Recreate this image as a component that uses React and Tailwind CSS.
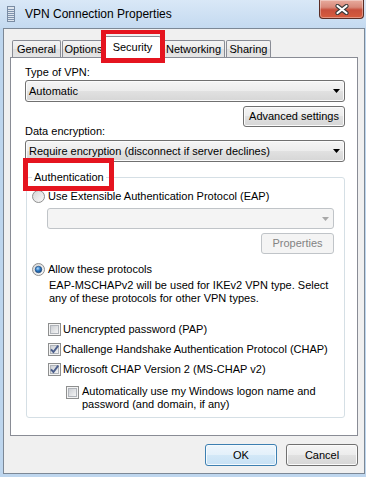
import React from 'react';

const Radio = ({ checked }) => (
    <svg width="13" height="13" viewBox="0 0 13 13" className="shrink-0">
        <defs>
            <linearGradient id="radioFill" x1="0" y1="0" x2="1" y2="1">
                <stop offset="0" stopColor="#d4d4d4" />
                <stop offset="1" stopColor="#fbfbfb" />
            </linearGradient>
            <radialGradient id="radioDot" cx="0.4" cy="0.35" r="0.75">
                <stop offset="0" stopColor="#b5dcfb" />
                <stop offset="0.45" stopColor="#2f7cc6" />
                <stop offset="1" stopColor="#123d73" />
            </radialGradient>
        </defs>
        <circle cx="6.5" cy="6.5" r="6" fill="url(#radioFill)" stroke="#8e8f8f" />
        {checked && <circle cx="6.5" cy="6.5" r="3.3" fill="url(#radioDot)" stroke="#1b4479" strokeWidth="0.6" />}
    </svg>
);

const Check = ({ checked }) => (
    <svg width="13" height="13" viewBox="0 0 13 13" className="shrink-0">
        <defs>
            <linearGradient id="checkFill" x1="0" y1="0" x2="1" y2="1">
                <stop offset="0" stopColor="#c9ccd1" />
                <stop offset="1" stopColor="#f7f7f7" />
            </linearGradient>
        </defs>
        <rect x="0.5" y="0.5" width="12" height="12" fill="#f4f4f4" stroke="#8e8f8f" />
        <rect x="2.5" y="2.5" width="8" height="8" fill="url(#checkFill)" stroke="#b0b4ba" />
        {checked && <path d="M3 6.3 L5.4 9 L10.2 2.6" fill="none" stroke="#4c5f8c" strokeWidth="1.9" />}
    </svg>
);

const Combo = ({ text, disabled, className = '' }) => (
    <div className={`shrink-0 flex items-center rounded-[3px] border ${disabled ? 'border-[#c0c4c8] bg-[#f4f4f4]' : 'border-[#707070] bg-[linear-gradient(#f5f5f5,#ececec_50%,#e1e1e1_50%,#d6d6d6)] shadow-[inset_0_0_0_1px_#fbfbfb]'} ${className}`}>
        <span className="flex-1 pl-[3px] whitespace-nowrap overflow-hidden">{text}</span>
        <svg width="7" height="4" viewBox="0 0 7 4" className="mr-[4px] shrink-0">
            <path d="M0 0h7L3.5 4z" fill={disabled ? '#a8a8a8' : '#000'} />
        </svg>
    </div>
);

const Btn = ({ children, isDefault, disabled, className = '' }) => {
    let look = 'border-[#707070] bg-[linear-gradient(#f5f5f5,#ececec_50%,#e1e1e1_50%,#d6d6d6)] shadow-[inset_0_0_0_1px_#fbfbfb] text-black';
    if (isDefault) look = 'border-[#3c7fb1] bg-[linear-gradient(#eef6fc,#e3f0fa_50%,#d3e8f7_50%,#c7e1f5)] shadow-[inset_0_0_0_1px_#f4fafe] text-black';
    if (disabled) look = 'border-[#c0c4c8] bg-[#f4f4f4] text-[#838383]';
    return (
        <button className={`shrink-0 flex items-center justify-center whitespace-nowrap rounded-[3px] border ${look} ${className}`}>
            {children}
        </button>
    );
};

const Tab = ({ label, width, selected, className = '' }) => (
    <div
        className={`relative whitespace-nowrap border border-b-0 border-[#898c95] rounded-t-[2px] text-center ${selected ? 'z-10 h-[22px] bg-white leading-[20px]' : 'h-[17px] mb-[1px] bg-[linear-gradient(#f3f3f3,#ebebeb_50%,#dedede_50%,#e5e5e5)] leading-[16px]'} ${className}`}
        style={{ width }}
    >
        {label}
    </div>
);

export default function App() {
    return (
        <div className="w-[366px] h-[477px] overflow-hidden bg-[#bed6ee] font-['Liberation_Sans',Arial,sans-serif] text-[11px] text-black">
            {/* title bar */}
            <div className="h-[28px] flex items-start bg-[linear-gradient(#d9e8f7,#c4daf0)]">
                <div className="h-[28px] flex items-center pl-[7px]">
                    <svg width="8" height="16" viewBox="0 0 8 16">
                        <rect x="0.5" y="0.5" width="7" height="15" fill="#dfe6ee" stroke="#7a8ca3" />
                        {[3, 5, 7, 9, 11, 13].map(y => (
                            <rect key={y} x="1" y={y} width="6" height="1" fill="#7f93ad" />
                        ))}
                    </svg>
                    <span className="ml-[10px] text-[12px]">VPN Connection Properties</span>
                </div>
                <div className="ml-auto mr-[2px] w-[45px] h-[19px] flex items-center justify-center rounded-b-[4px] border border-t-0 border-[#5a2c24] bg-[linear-gradient(#e8ab9e,#d8897a_40%,#c84f3c_55%,#d65c3e)] shadow-[inset_0_0_0_1px_rgba(255,255,255,0.35)]">
                    <svg width="14" height="11" viewBox="0 0 14 11">
                        <path d="M2.5 2 L11.5 9 M11.5 2 L2.5 9" stroke="#3a3a3a" strokeWidth="4.2" strokeLinecap="round" />
                        <path d="M2.5 2 L11.5 9 M11.5 2 L2.5 9" stroke="#ffffff" strokeWidth="2.2" strokeLinecap="round" />
                    </svg>
                </div>
            </div>

            {/* client area */}
            <div className="relative ml-[3px] w-[362px] h-[446px] border border-[#7c8896] bg-[#f0f0f0] flex flex-col">
                <div className="h-[29px] shrink-0 flex items-end pl-[8px]">
                    <Tab label="General" width={49} />
                    <Tab label="Options" width={43} className="ml-[1px]" />
                    <Tab label="Security" width={57} selected className="-ml-[1px]" />
                    <Tab label="Networking" width={63} className="ml-[1px]" />
                    <Tab label="Sharing" width={45} className="ml-[1px]" />
                </div>

                <div className="shrink-0 -mt-[1px] ml-[6px] w-[348px] h-[379px] border border-[#898c95] bg-white pl-[14px] pr-[12px] pt-[7px] flex flex-col">
                    <div className="h-[15px] leading-[15px]">Type of VPN:</div>
                    <Combo text="Automatic" className="h-[22px]" />
                    <Btn className="self-end mt-[4px] w-[102px] h-[21px]">Advanced settings</Btn>
                    <div className="-mt-[2px] h-[13px] leading-[13px]">Data encryption:</div>
                    <Combo text="Require encryption (disconnect if server declines)" className="mt-[2px] h-[22px]" />

                    <fieldset className="min-w-0 mt-[8px] ml-[1px] border border-[#d5dfe5] rounded-[3px]">
                        <legend className="ml-[5px] px-[2px] h-[14px] leading-[14px]">Authentication</legend>
                        <div className="pl-[5px] pr-[10px] pb-[6px] flex flex-col whitespace-nowrap">
                            <label className="mt-[5px] h-[15px] flex items-center gap-[3px]">
                                <Radio />
                                <span>Use Extensible Authentication Protocol (EAP)</span>
                            </label>
                            <Combo text="" disabled className="mt-[4px] ml-[15px] h-[21px]" />
                            <Btn disabled className="self-end mt-[4px] w-[73px] h-[21px]">Properties</Btn>
                            <label className="mt-[8px] h-[15px] flex items-center gap-[3px]">
                                <Radio checked />
                                <span>Allow these protocols</span>
                            </label>
                            <div className="mt-[2px] ml-[17px] leading-[13px]">
                                EAP-MSCHAPv2 will be used for IKEv2 VPN type. Select<br />
                                any of these protocols for other VPN types.
                            </div>
                            <div className="ml-[16px] flex flex-col">
                                <label className="mt-[17px] h-[15px] flex items-center gap-[2px]">
                                    <Check />
                                    <span>Unencrypted password (PAP)</span>
                                </label>
                                <label className="mt-[5px] h-[15px] flex items-center gap-[2px]">
                                    <Check checked />
                                    <span>Challenge Handshake Authentication Protocol (CHAP)</span>
                                </label>
                                <label className="mt-[5px] h-[15px] flex items-center gap-[2px]">
                                    <Check checked />
                                    <span>Microsoft CHAP Version 2 (MS-CHAP v2)</span>
                                </label>
                                <label className="mt-[8px] ml-[18px] flex items-start gap-[3px]">
                                    <span className="pt-[1px]"><Check /></span>
                                    <span className="leading-[13px]">
                                        Automatically use my Windows logon name and<br />
                                        password (and domain, if any)
                                    </span>
                                </label>
                            </div>
                        </div>
                    </fieldset>
                </div>

                <div className="mt-[8px] pr-[6px] flex justify-end gap-[9px]">
                    <Btn isDefault className="w-[72px] h-[22px]">OK</Btn>
                    <Btn className="w-[72px] h-[22px]">Cancel</Btn>
                </div>

                {/* red annotation frames */}
                <div className="pointer-events-none absolute left-[97px] top-[1px] w-[64px] h-[33px] border-[5px] border-t-[4px] border-[#e5141f] z-20" />
                <div className="pointer-events-none absolute left-[19px] top-[129px] w-[91px] h-[33px] border-[5px] border-[#e5141f] z-20" />
            </div>
        </div>
    );
}
